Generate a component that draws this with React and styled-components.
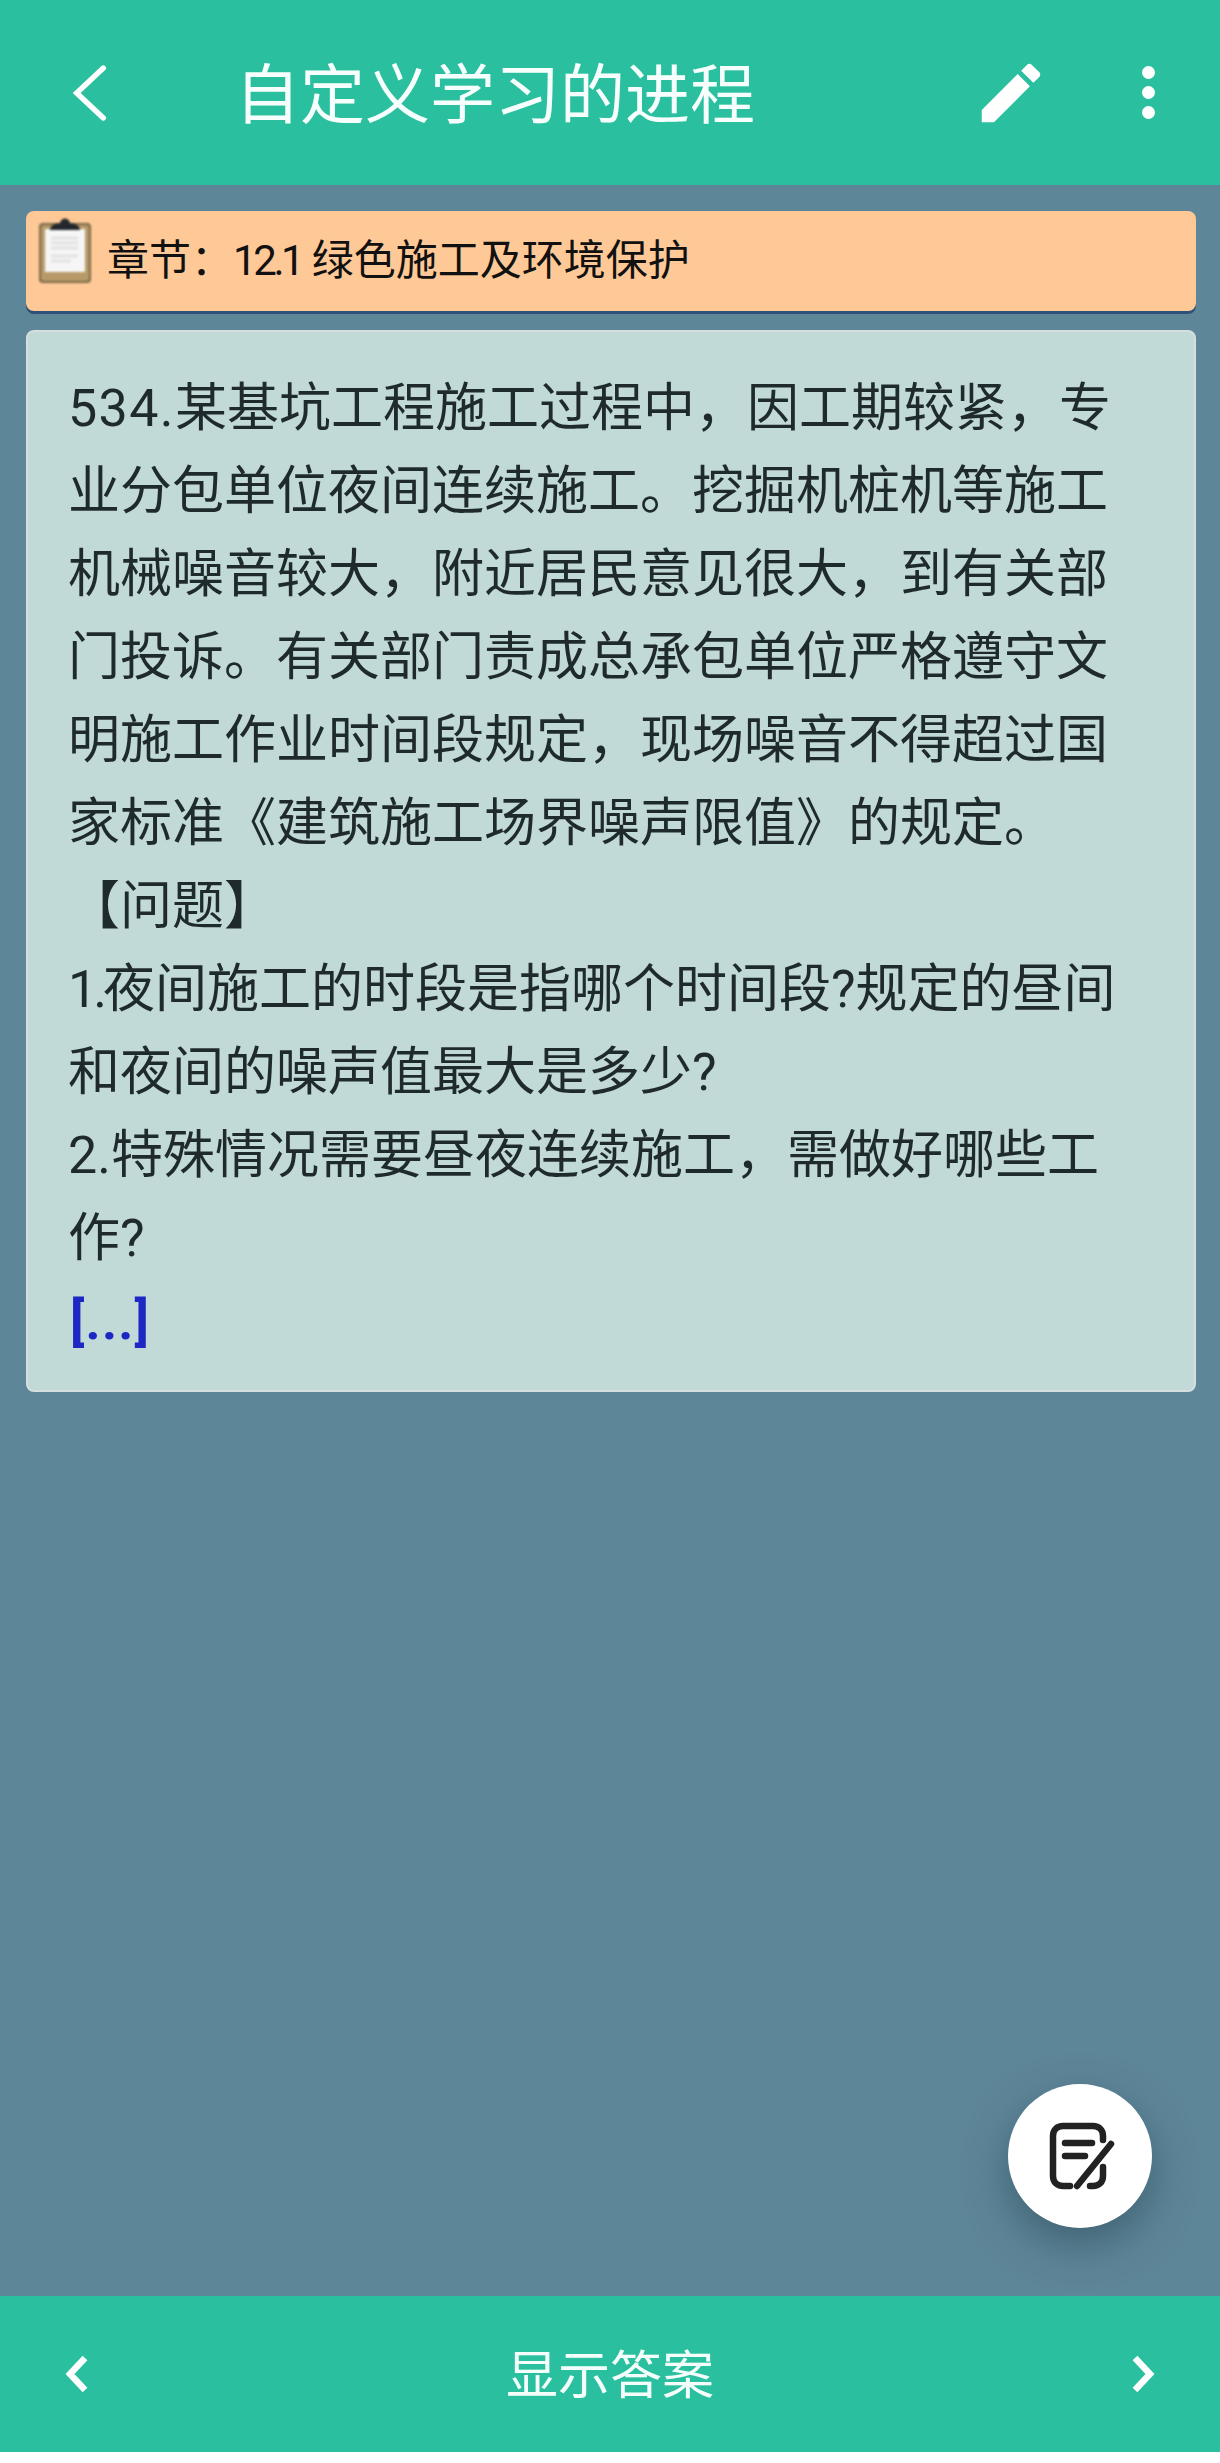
import React from 'react'
import styled, { createGlobalStyle } from 'styled-components'

const Global = createGlobalStyle`
    html, body {
        margin: 0;
        padding: 0;
        background: #fff;
        font-family: Roboto, 'Noto Sans CJK SC', sans-serif;
    }
`

function Clipboard() {
    return (
        <ClipIcon viewBox="0 0 54 68">
            <rect x="1" y="7" width="52" height="60" rx="4" fill="#7d6a4a" />
            <rect x="3" y="9" width="48" height="56" rx="3" fill="#b89a68" />
            <rect x="7" y="13" width="40" height="43" fill="#f6f6f6" />
            <path d="M13 22h27M13 27h27M13 32h27M13 40h27M13 45h20" stroke="#e2e2e2" strokeWidth="3" />
            <path d="M12 14c0-4 5-7 10-7 1-6 9-6 10 0 5 0 10 3 10 7z" fill="#23282c" />
        </ClipIcon>
    )
}

export default function App() {
    return (
        <Page>
            <Global />
            <Header>
                <BackIcon viewBox="0 0 48 72">
                    <path d="M40 6 8 36l32 30" />
                </BackIcon>
                <Title>自定义学习的进程</Title>
                <PenIcon viewBox="0 0 24 24">
                    <path d="M3 17.25V21h3.75L17.81 9.94l-3.75-3.75L3 17.25zM20.71 7.04c.39-.39.39-1.02 0-1.41l-2.34-2.34c-.39-.39-1.02-.39-1.41 0l-1.83 1.83 3.75 3.75 1.83-1.83z" />
                </PenIcon>
                <Dots>
                    <i />
                    <i />
                    <i />
                </Dots>
            </Header>
            <Main>
                <Chapter>
                    <Clipboard />
                    <ChapterText>
                        章节：<Num $track={-3.4}>12.1</Num> 绿色施工及环境保护
                    </ChapterText>
                </Chapter>
                <Card>
                    <div>
                        <Num $track={1.4}>534.</Num>
                        某基坑工程施工过程中，因工期较紧，专业分包单位夜间连续施工。挖掘机桩机等施工机械噪音较大，附近居民意见很大，到有关部门投诉。有关部门责成总承包单位严格遵守文明施工作业时间段规定，现场噪音不得超过国家标准《建筑施工场界噪声限值》的规定。
                    </div>
                    <div>【问题】</div>
                    <div>
                        <Num $track={-4}>1.</Num>
                        夜间施工的时段是指哪个时间段?规定的昼间和夜间的噪声值最大是多少?
                    </div>
                    <div>2.特殊情况需要昼夜连续施工，需做好哪些工作?</div>
                    <More>[...]</More>
                </Card>
                <Fab>
                    <svg width="72" height="72" viewBox="0 0 72 72" fill="none" stroke="#222" strokeWidth="6.5" strokeLinecap="round" strokeLinejoin="round">
                        <path d="M26 66h-7c-6 0-10-4-10-10V16C9 10 13 6 19 6h30c6 0 10 4 10 10v4" />
                        <path d="M59 47v9c0 6-4 10-10 10h-3" />
                        <path d="M21 23h27M21 36h20" />
                        <path d="M67 24 33 66" />
                    </svg>
                </Fab>
            </Main>
            <Footer>
                <Chevron viewBox="0 0 24 40">
                    <path d="M20 4 5 20l15 16" />
                </Chevron>
                <FooterLabel>显示答案</FooterLabel>
                <Chevron viewBox="0 0 24 40">
                    <path d="M4 4l15 16L4 36" />
                </Chevron>
            </Footer>
            <BottomGap />
        </Page>
    )
}

const Page = styled.div`
    width: 1220px;
    height: 2463px;
    display: flex;
    flex-direction: column;
    overflow: hidden;
`
const Header = styled.header`
    height: 185px;
    flex: none;
    background: #2abf9f;
    display: flex;
    align-items: center;
    color: #fff;
    padding: 0 65px 0 70px;
    box-sizing: border-box;
`
const BackIcon = styled.svg`
    width: 40px;
    height: 62px;
    flex: none;
    fill: none;
    stroke: #fff;
    stroke-width: 6.5;
    stroke-linecap: round;
`
const Title = styled.h1`
    margin: 7px 0 0 125px;
    flex: 1;
    font-size: 65px;
    font-weight: 400;
    line-height: 1;
    color: #f7fffd;
`
const PenIcon = styled.svg`
    width: 78px;
    height: 78px;
    margin-left: -2px;
    flex: none;
    fill: #fff;
`
const Dots = styled.div`
    flex: none;
    margin-left: 92px;
    display: flex;
    flex-direction: column;
    gap: 7px;

    i {
        display: block;
        width: 13px;
        height: 13px;
        border-radius: 50%;
        background: #fff;
    }
`
const Main = styled.main`
    flex: 1;
    position: relative;
    background: #5d8698;
    padding: 26px 24px 0 26px;
    box-sizing: border-box;
`
const Chapter = styled.section`
    height: 100px;
    border-radius: 8px;
    background: #fec996;
    box-shadow: 0 3px 0 #2f5179;
    display: flex;
    align-items: flex-start;
    padding: 5px 0 0 12px;
    box-sizing: border-box;
`
const ClipIcon = styled.svg`
    width: 54px;
    height: 68px;
    flex: none;
    filter: blur(0.8px);
`
const ChapterText = styled.span`
    margin: 21px 0 0 15px;
    font-size: 42px;
    line-height: 48px;
    color: #111;
`
const Num = styled.span`
    letter-spacing: ${(p) => p.$track}px;
`
const Card = styled.section`
    margin-top: 19px;
    padding: 35px 44px 27px 40px;
    border: 2px solid #d6dfdf;
    border-radius: 8px;
    background: #c2dad7;
    color: #1f2a2e;
    font-size: 52px;
    line-height: 83px;
    box-sizing: border-box;
`
const More = styled.div`
    padding-left: 2px;
    color: #1d28c4;
    font-weight: 700;
    letter-spacing: 1.2px;
`
const Fab = styled.button`
    position: absolute;
    left: 1008px;
    top: 1899px;
    width: 144px;
    height: 144px;
    padding: 0;
    border: 0;
    border-radius: 50%;
    background: #fff;
    box-shadow: 0 16px 40px rgba(40, 70, 85, 0.55);
    display: flex;
    align-items: center;
    justify-content: center;
`
const Footer = styled.footer`
    height: 156px;
    flex: none;
    background: #2abf9f;
    display: flex;
    align-items: center;
    justify-content: space-between;
    padding: 0 64px;
    box-sizing: border-box;
`
const Chevron = styled.svg`
    width: 26px;
    height: 40px;
    fill: none;
    stroke: #fff;
    stroke-width: 6.5;
`
const FooterLabel = styled.span`
    margin-top: 6px;
    font-size: 52px;
    line-height: 1;
    color: #f4fffc;
`
const BottomGap = styled.div`
    height: 11px;
    flex: none;
    background: #fff;
`
